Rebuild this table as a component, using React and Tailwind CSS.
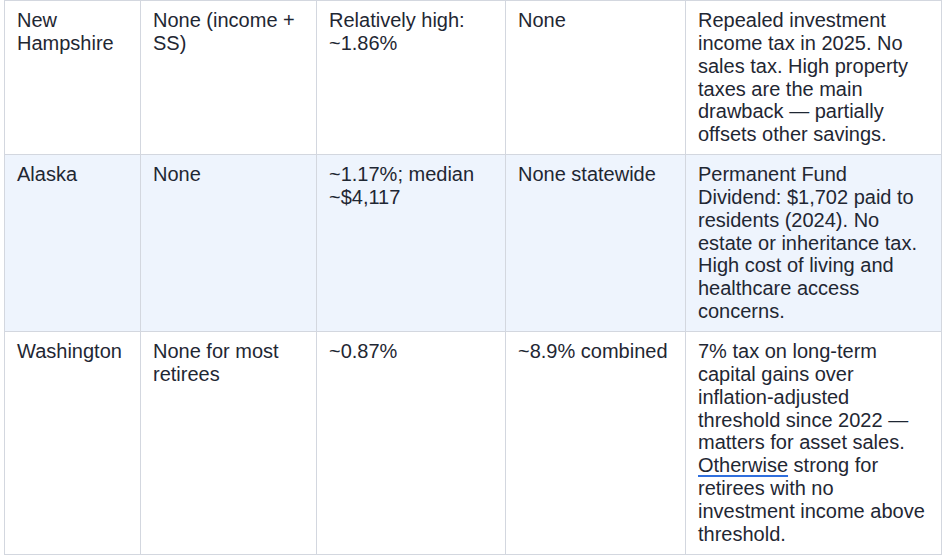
import React from "react";

const rows = [
  {
    state: "New Hampshire",
    income: "None (income + SS)",
    property: "Relatively high: ~1.86%",
    sales: "None",
    notes: "Repealed investment income tax in 2025. No sales tax. High property taxes are the main drawback — partially offsets other savings.",
  },
  {
    state: "Alaska",
    income: "None",
    property: "~1.17%; median ~$4,117",
    sales: "None statewide",
    notes: "Permanent Fund Dividend: $1,702 paid to residents (2024). No estate or inheritance tax. High cost of living and healthcare access concerns.",
    shaded: true,
  },
  {
    state: "Washington",
    income: "None for most retirees",
    property: "~0.87%",
    sales: "~8.9% combined",
    notes: (
      <>
        7% tax on long-term capital gains over inflation-adjusted threshold since 2022 — matters for asset sales.{" "}
        <span className="underline decoration-[#2f6fde] decoration-[1.5px] underline-offset-[3px]">Otherwise</span> strong for
        retirees with no investment income above threshold.
      </>
    ),
  },
];

const cell = "border border-[#d3d7df] px-[12px] pt-[8px] pb-[8px] align-top text-left";

export default function App() {
  return (
    <div className="w-[946px] h-[556px] bg-white overflow-hidden pl-[4px]" style={{ fontFamily: '"Liberation Sans", Arial, sans-serif' }}>
      <table className="border-collapse table-fixed w-[937px] text-[20px] leading-[22.85px] text-[#1f2733]">
        <colgroup>
          <col className="w-[136px]" />
          <col className="w-[176px]" />
          <col className="w-[189px]" />
          <col className="w-[180px]" />
          <col className="w-[256px]" />
        </colgroup>
        <tbody>
          {rows.map((r, i) => (
            <tr key={i} className={r.shaded ? "bg-[#eef4fd]" : "bg-white"}>
              <td className={cell}>{r.state}</td>
              <td className={cell}>{r.income}</td>
              <td className={cell}>{r.property}</td>
              <td className={cell}>{r.sales}</td>
              <td className={cell}>{r.notes}</td>
            </tr>
          ))}
        </tbody>
      </table>
    </div>
  );
}
